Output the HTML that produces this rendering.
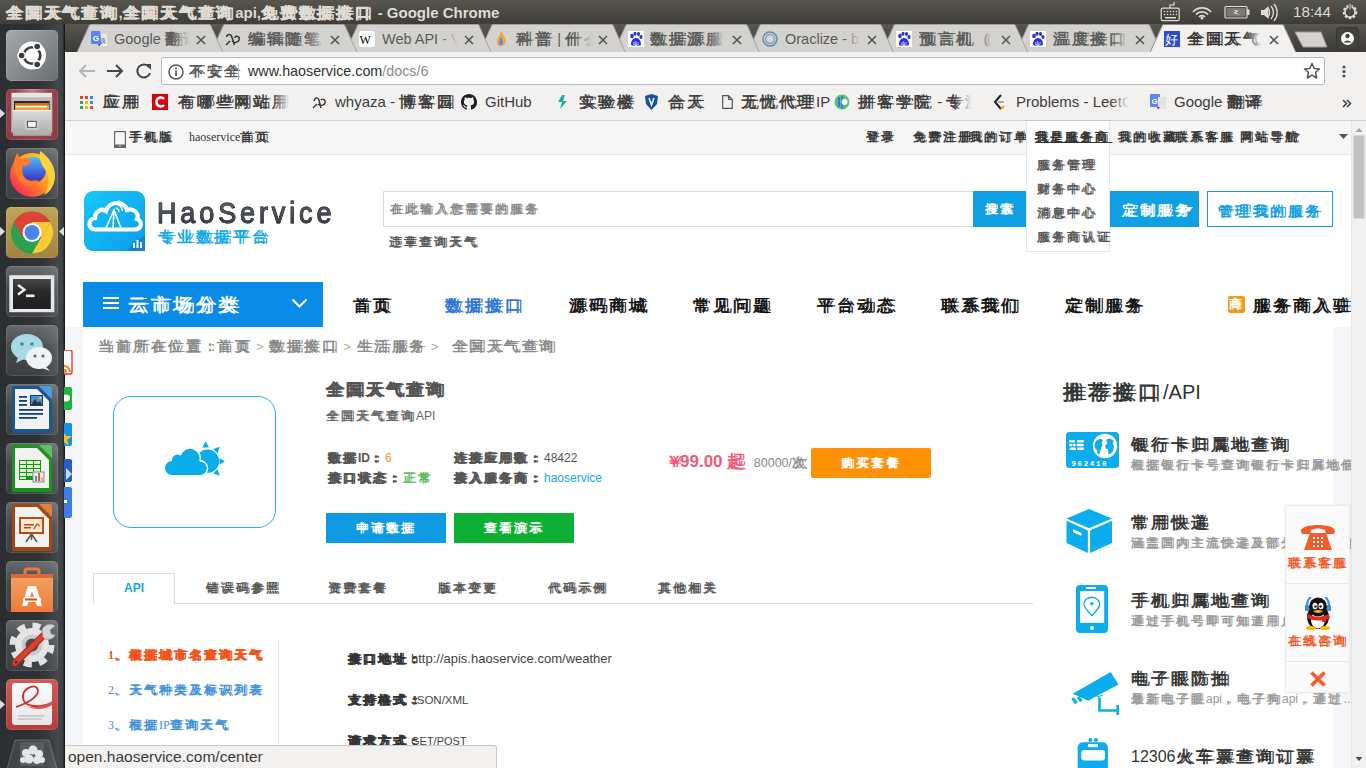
<!DOCTYPE html>
<html><head><meta charset="utf-8">
<style>
*{box-sizing:border-box;margin:0;padding:0}
html,body{width:1366px;height:768px;overflow:hidden;background:#fff;font-family:"Liberation Sans",sans-serif;}
.a{position:absolute}
#title{left:0;top:0;width:1366px;height:24px;background:linear-gradient(#56554e,#3d3c38);color:#dfdbd2;font-size:15px;font-weight:bold;line-height:26px;padding-left:6px;white-space:nowrap}
#launcher{left:0;top:24px;width:65px;height:744px;background:linear-gradient(to right,#2b2f32 0,#2e3235 38px,#383b3e 48px,#45484a 58px,#3e4143 63px,#1c1e20 64px);border-right:1px solid #16181a}
.tile{position:absolute;left:6px;width:52px;height:51px;border-radius:5px;background:linear-gradient(rgba(255,255,255,0.28),rgba(255,255,255,0.12) 45%,rgba(255,255,255,0.08));box-shadow:inset 0 0 0 1px rgba(255,255,255,0.12);overflow:hidden}
.tile svg{position:absolute;left:0;top:0}
#tabstrip{left:65px;top:24px;width:1301px;height:28px;background:linear-gradient(#57564f,#3c3b37)}
.ttl{font-size:14.5px;white-space:nowrap;overflow:hidden;width:76px;height:20px;line-height:20px}
.fade{position:absolute;right:0;top:0;width:18px;height:20px}
#toolbar{left:65px;top:52px;width:1301px;height:69px;background:#f2f1f0;border-bottom:1px solid #cdcdcd}
#omni{left:161px;top:57px;width:1164px;height:28px;background:#fff;border:1px solid #b9b9b9;border-radius:2px}
.bm{position:absolute;top:92px;font-size:15px;color:#3c3c3c;white-space:nowrap;line-height:20px}
#page{left:65px;top:121px;width:1287px;height:647px;background:#fff;overflow:hidden}
#topbar{left:0;top:0;width:1287px;height:34px;background:#f7f7f7;border-bottom:1px solid #e6e6e6;font-size:13px;color:#333}
.tb{position:absolute;top:8px;white-space:nowrap;line-height:17px}
#scroll{left:1352px;top:121px;width:14px;height:647px;background:#f1f1f1;border-left:1px solid #e8e8e8}
.tp{position:absolute;top:129px;font-size:12px;color:#333;line-height:17px;white-space:nowrap}
.dd{position:absolute;left:1037px;font-size:12px;color:#555;line-height:17px;white-space:nowrap}
.nv{position:absolute;top:295px;font-size:16px;color:#111;line-height:21px;white-space:nowrap}
.inf{position:absolute;font-size:12px;color:#555;line-height:17px;white-space:nowrap}
.inf b{color:#555}
.tbx{position:absolute;top:579px;font-size:12px;color:#555;line-height:18px;white-space:nowrap}
.lm{position:absolute;left:108px;font-size:12px;line-height:18px;white-space:nowrap}
.ap{position:absolute;left:348px;font-size:12px;color:#444;line-height:18px;white-space:nowrap}
.ap b{color:#333;display:inline-block;width:63px}
.rt{position:absolute;left:1131px;font-size:16px;color:#333;line-height:20px;white-space:nowrap}
.rs{position:absolute;left:1131px;font-size:12px;color:#999;line-height:16px;white-space:nowrap}
.fp{position:absolute;left:1285px;width:65px;text-align:center;font-size:12px;color:#f05a28;line-height:17px}
.c{letter-spacing:.25em;-webkit-text-stroke:.04em currentColor;text-shadow:.2em 0 0 currentColor}
</style></head><body>
<div id="title" class="a"><span class="c">全国天气查询</span>,<span class="c">全国天气查询</span>api,<span class="c">免费数据接口</span> - Google Chrome</div>
<svg class="a" style="left:1150px;top:0" width="216" height="24" viewBox="0 0 216 24">
 <g fill="none" stroke="#dfdbd2" stroke-width="1.2">
  <rect x="11.2" y="8.2" width="18" height="12.5" rx="1.5"/><path d="M20 8 L20 5 L24 5 L24 2"/>
  <path d="M43 12 A12 12 0 0 1 61 12 M46 14.5 A8 8 0 0 1 58 14.5 M49 17 A4 4 0 0 1 55 17" stroke-width="1.8"/>
  <rect x="75" y="6.5" width="22" height="11.5" rx="1"/>
  <path d="M118 8 A7 7 0 0 1 118 17 M121 6 A10 10 0 0 1 121 19 M124 4 A13 13 0 0 1 124 21" stroke-width="1.3"/>
 </g>
 <rect x="97" y="9.5" width="2.5" height="5.5" fill="#dfdbd2"/>
 <rect x="76.5" y="8" width="19" height="8.5" fill="#7a7770"/>
 <path d="M83 10 L89 10.5 L86 12.5 L90 15 L83 13 L86 11.5Z" fill="#dfdbd2"/>
 <g fill="#dfdbd2"><circle cx="14.5" cy="11.5" r=".8"/><circle cx="17.5" cy="11.5" r=".8"/><circle cx="20.5" cy="11.5" r=".8"/><circle cx="23.5" cy="11.5" r=".8"/><circle cx="26.5" cy="11.5" r=".8"/><circle cx="14.5" cy="14.5" r=".8"/><circle cx="17.5" cy="14.5" r=".8"/><circle cx="20.5" cy="14.5" r=".8"/><circle cx="23.5" cy="14.5" r=".8"/><circle cx="26.5" cy="14.5" r=".8"/><rect x="15" y="17" width="11" height="1.5"/>
 <circle cx="52" cy="18" r="1.5"/>
 <path d="M111 10 L114 10 L118.5 6 L118.5 19 L114 15 L111 15Z"/></g>
 <g transform="translate(200,12)"><circle r="6" fill="none" stroke="#dfdbd2" stroke-width="2.6" stroke-dasharray="2.4 1.6"/><circle r="5.2" fill="none" stroke="#dfdbd2" stroke-width="1.6"/><rect x="-1" y="-9" width="2" height="7" fill="#dfdbd2" stroke="#46453f" stroke-width="1"/></g>
</svg>
<div class="a" style="left:1293px;top:3px;font-size:15.2px;color:#dfdbd2;line-height:18px">18:44</div>
<div id="launcher" class="a"></div>
<div id="tabstrip" class="a"></div>
<div class="a" style="left:0;top:24px;width:65px;height:744px;overflow:hidden">
<!-- ubuntu -->
<div class="tile" style="top:6px;background:linear-gradient(135deg,#a3a9ac,#686f72);"><svg width="52" height="51"><circle cx="26" cy="25.5" r="14" fill="#fff"/><circle cx="26" cy="25.5" r="8.3" fill="none" stroke="#3c3c3c" stroke-width="2.6"/><circle cx="15.6" cy="25.5" r="4.4" fill="#fff"/><circle cx="31.2" cy="16.5" r="4.4" fill="#fff"/><circle cx="31.2" cy="34.5" r="4.4" fill="#fff"/><circle cx="15.6" cy="25.5" r="2.8" fill="#3c3c3c"/><circle cx="31.2" cy="16.5" r="2.8" fill="#3c3c3c"/><circle cx="31.2" cy="34.5" r="2.8" fill="#3c3c3c"/></svg></div>
<!-- files -->
<div class="tile" style="top:65px;background:radial-gradient(ellipse at 50% 0%,#c8868e 0,#9a4450 45%,#8a3a46 100%);"><svg width="52" height="51"><defs><linearGradient id="fdr" x1="0" y1="0" x2="0" y2="1"><stop offset="0" stop-color="#dcdcdc"/><stop offset="1" stop-color="#a9a9a9"/></linearGradient></defs>
<rect x="5.5" y="3.8" width="40.5" height="5" fill="#e6e6e6"/><rect x="5.3" y="8.5" width="41" height="35" fill="#bdbdbd"/><rect x="8" y="12" width="35.6" height="9" fill="#2a2a2a"/><rect x="9" y="14" width="34" height="7" fill="#f0a040"/><rect x="9" y="14" width="34" height="2" fill="#d86a28"/><rect x="10" y="17" width="31" height="1.3" fill="#fff"/>
<rect x="6.9" y="21" width="38.3" height="25.8" fill="url(#fdr)"/><rect x="6.9" y="21" width="38.3" height="1.3" fill="#eee"/><rect x="19" y="30" width="13.7" height="11" rx="1.5" fill="#c9c9c9"/><rect x="21.5" y="32.3" width="8.7" height="6" fill="#f4f4f4" stroke="#444" stroke-width=".9"/></svg></div>
<!-- firefox -->
<div class="tile" style="top:124px;"><svg width="52" height="51"><defs><linearGradient id="ffg" x1="1" y1="0" x2="0" y2="1"><stop offset="0" stop-color="#ffe531"/><stop offset=".45" stop-color="#ff9a22"/><stop offset=".8" stop-color="#ff3a4a"/><stop offset="1" stop-color="#d4177f"/></linearGradient><linearGradient id="fbg" x1="0" y1="0" x2="0" y2="1"><stop offset="0" stop-color="#50baff"/><stop offset="1" stop-color="#3a27b8"/></linearGradient></defs>
<circle cx="26" cy="27" r="22" fill="url(#ffg)"/><circle cx="27" cy="22" r="13" fill="url(#fbg)"/>
<path d="M8 13 L11 5 L15 11 C20 9 24 11 25 14 L21 17 L17 18 C15 24 17 30 22 32 C26 34 30 31 33 33 C29 38 22 39 17 36 C11 32 8 22 8 13Z" fill="#ff7a2a"/>
<path d="M34 3 C42 8 50 18 49 30 C48 38 44 44 38 47 C44 38 44 28 38 20 C35 16 33 10 34 3Z" fill="#ffd23a"/></svg></div>
<!-- chrome -->
<div class="tile" style="top:183px;background:linear-gradient(#c0a659,#9e8440);"><svg width="52" height="51"><circle cx="26" cy="25.5" r="21" fill="#2aa24d"/><path d="M26 4.5 A21 21 0 0 1 44.2 15 L26 15 Z" fill="#db4437"/><path d="M7.8 15 A21 21 0 0 1 26 4.5 L44.2 15 L26 15 L16.9 30.75Z" fill="#db4437"/><path d="M44.2 15 A21 21 0 0 1 26 46.5 L35.1 30.75Z" fill="#fcc934"/><path d="M26 15 L44.2 15 L35.1 30.75Z" fill="#fcc934"/><circle cx="26" cy="25.5" r="9.5" fill="#fff"/><circle cx="26" cy="25.5" r="7.5" fill="#4a86e8"/></svg></div>
<!-- terminal -->
<div class="tile" style="top:242px;"><svg width="52" height="51"><defs><linearGradient id="term" x1="0" y1="0" x2="0" y2="1"><stop offset="0" stop-color="#4a4a4a"/><stop offset=".4" stop-color="#2a2a2a"/><stop offset="1" stop-color="#1e1e1e"/></linearGradient></defs><rect x="3.3" y="9.2" width="45" height="37" fill="#e8e8e8"/><rect x="7" y="13" width="37.8" height="30" fill="url(#term)"/><path d="M12 19 L18.5 23.7 L12 28.5" stroke="#f0f0f0" stroke-width="2.4" fill="none"/><rect x="20" y="28.5" width="8.5" height="2.6" fill="#f0f0f0"/></svg></div>
<!-- wechat -->
<div class="tile" style="top:301px;"><svg width="52" height="51"><ellipse cx="21" cy="22" rx="16" ry="13" fill="#a6dbe6"/><path d="M12 32 L10 38 L18 34Z" fill="#a6dbe6"/><circle cx="16" cy="19" r="1.8" fill="#5c7a82"/><circle cx="26" cy="19" r="1.8" fill="#5c7a82"/><ellipse cx="33" cy="33" rx="13" ry="11" fill="#eef3f3"/><path d="M40 42 L44 46 L36 43Z" fill="#eef3f3"/><circle cx="29" cy="31" r="1.6" fill="#666"/><circle cx="37" cy="31" r="1.6" fill="#666"/></svg></div>
<!-- writer -->
<div class="tile" style="top:360px;"><svg width="52" height="51"><path d="M8 2 L32 2 L46 16 L46 47 Q46 49 44 49 L8 49 Q6 49 6 47 L6 4 Q6 2 8 2Z" fill="#1b5794"/><path d="M33 2 L44 2 Q46 2 46 4 L46 15Z" fill="#4f9bd9"/><path d="M9 5 L31 5 L43 17 L43 45 L9 45Z" fill="#f2f2f2"/><rect x="13" y="12" width="8" height="1.8" fill="#123f7a"/><rect x="13" y="16" width="8" height="1.8" fill="#123f7a"/><rect x="13" y="20" width="8" height="1.8" fill="#123f7a"/><rect x="24" y="11" width="13" height="11" fill="#123f7a"/><rect x="25" y="12" width="11" height="9" fill="#4a8fd0"/><path d="M25 21 L29 15 L32 19 L34 17 L36 21Z" fill="#333"/><circle cx="34.5" cy="14" r="1.3" fill="#f5c542"/><rect x="13" y="25" width="24" height="1.8" fill="#123f7a"/><rect x="13" y="29" width="24" height="1.8" fill="#123f7a"/><rect x="13" y="33" width="18" height="1.8" fill="#123f7a"/></svg></div>
<!-- calc -->
<div class="tile" style="top:419px;"><svg width="52" height="51"><path d="M8 2 L32 2 L46 16 L46 47 Q46 49 44 49 L8 49 Q6 49 6 47 L6 4 Q6 2 8 2Z" fill="#18961a"/><path d="M33 2 L44 2 Q46 2 46 4 L46 15Z" fill="#5cc25a"/><path d="M9 5 L31 5 L43 17 L43 45 L9 45Z" fill="#f2f2f2"/><rect x="13" y="17" width="22" height="20" fill="#18961a"/><g fill="#d8f3d0"><rect x="14" y="18" width="6" height="3"/><rect x="21" y="18" width="6" height="3"/><rect x="28" y="18" width="6" height="3"/><rect x="14" y="22" width="6" height="3"/><rect x="21" y="22" width="6" height="3"/><rect x="28" y="22" width="6" height="3"/><rect x="14" y="26" width="6" height="3"/><rect x="21" y="26" width="6" height="3"/><rect x="28" y="26" width="6" height="3"/><rect x="14" y="30" width="6" height="3"/><rect x="21" y="30" width="6" height="3"/><rect x="14" y="34" width="6" height="2"/></g><rect x="27" y="29" width="11" height="10" fill="#eee" stroke="#888" stroke-width="1"/><rect x="29" y="33" width="2" height="5" fill="#3d8ee8"/><rect x="32" y="30" width="2" height="8" fill="#e8562a"/><rect x="35" y="34" width="2" height="4" fill="#f5b82e"/></svg></div>
<!-- impress -->
<div class="tile" style="top:478px;"><svg width="52" height="51"><path d="M8 2 L32 2 L46 16 L46 47 Q46 49 44 49 L8 49 Q6 49 6 47 L6 4 Q6 2 8 2Z" fill="#a5460f"/><path d="M33 2 L44 2 Q46 2 46 4 L46 15Z" fill="#e0803a"/><path d="M9 5 L31 5 L43 17 L43 45 L9 45Z" fill="#f2f2f2"/><rect x="13" y="15" width="25" height="17" fill="#b84c0f"/><rect x="15" y="17" width="21" height="13" fill="#fde8d6"/><rect x="18" y="22" width="10" height="1.5" fill="#b84c0f"/><rect x="18" y="25" width="7" height="1.5" fill="#b84c0f"/><path d="M28 27 L31 22 L34 24" stroke="#d04020" stroke-width="1.3" fill="none"/><path d="M25.5 32 L20 40 M25.5 32 L31 40 M25.5 32 L25.5 38" stroke="#555" stroke-width="1.5"/></svg></div>
<!-- software -->
<div class="tile" style="top:537px;"><svg width="52" height="51"><defs><linearGradient id="bag" x1="0" y1="0" x2="0" y2="1"><stop offset="0" stop-color="#f4a060"/><stop offset="1" stop-color="#ee7a3a"/></linearGradient></defs><path d="M19 18 L19 10 Q19 8 21 8 L31 8 Q33 8 33 10 L33 18" stroke="#e87848" stroke-width="3" fill="none"/><rect x="5" y="13" width="42" height="4" fill="#d8683a"/><rect x="5" y="17" width="42" height="34" fill="url(#bag)"/><path d="M22 25 L30 25 L36 45 L31 45 L26 30 L21 45 L16 45Z" fill="#fff"/><rect x="17" y="36" width="18" height="5" rx="2.5" fill="#fff"/><rect x="19" y="37.5" width="12" height="2" fill="#e04a10"/></svg></div>
<!-- settings -->
<div class="tile" style="top:596px;"><svg width="52" height="51"><circle cx="26" cy="25" r="19.5" fill="none" stroke="#e2e2e2" stroke-width="6" stroke-dasharray="8 7.3"/><circle cx="26" cy="25" r="17" fill="#e4e4e4"/><circle cx="26" cy="25" r="10.5" fill="#c9c9c9"/><circle cx="26" cy="25" r="6.5" fill="#4e4e4e"/><path d="M9 43 L39 14" stroke="#a82a20" stroke-width="7" stroke-linecap="round"/><path d="M9 43 L39 14" stroke="#d8402e" stroke-width="5" stroke-linecap="round"/><circle cx="10" cy="42" r="1.6" fill="#8a1e16"/><path d="M36 10 C38 4 46 3 49 6 L44 10 L45 14 L49 15 C47 20 40 21 37 17Z" fill="#d6d6d6" stroke="#9a9a9a" stroke-width=".8"/></svg></div>
<!-- red app -->
<div class="tile" style="top:655px;background:linear-gradient(#d25a5a,#b43c3c);"><svg width="52" height="51"><defs><linearGradient id="rdoc" x1="0" y1="0" x2="0" y2="1"><stop offset="0" stop-color="#fbfbfb"/><stop offset="1" stop-color="#e6e6e6"/></linearGradient></defs><rect x="6" y="4" width="40" height="42" rx="3" fill="url(#rdoc)"/><path d="M10 28 C22 24 36 16 31 9 C27 5 16 10 17 19 C18 27 30 30 46 24" stroke="#d22a2a" stroke-width="1.8" fill="none"/><path d="M20 27 C30 30 40 27 46 22 L46 26 C38 31 28 31 20 27Z" fill="#e05050"/><path d="M12 37 H38 M12 40 H36" stroke="#aaa" stroke-width=".9"/></svg></div>
<!-- trash -->
<div class="tile" style="top:714px;background:none;box-shadow:none;overflow:visible"><svg width="52" height="51"><path d="M9 2 L43 2 L51 31 L1 31Z" fill="rgba(255,255,255,0.10)" stroke="rgba(255,255,255,0.22)" stroke-width="1"/><rect x="14" y="4" width="24" height="24" rx="2" fill="rgba(255,255,255,0.12)"/><g fill="#e6e6e6"><circle cx="20" cy="15" r="4"/><circle cx="27" cy="12" r="4.5"/><circle cx="33" cy="16" r="4"/><circle cx="23" cy="21" r="4.5"/><circle cx="31" cy="22" r="4"/><circle cx="17" cy="22" r="3"/><circle cx="36" cy="22" r="3"/></g></svg></div>
<!-- arrows -->
<svg class="a" style="left:0;top:0" width="65" height="744"><path d="M0 85 L5 89.5 L0 94Z" fill="#ddd"/><path d="M0 203 L5 207.5 L0 212Z" fill="#ddd"/><path d="M64 203 L59 207.5 L64 212Z" fill="#ddd"/><path d="M0 676 L5 680.5 L0 685Z" fill="#ddd"/></svg>
</div>
<svg class="a" style="left:65px;top:24px" width="1301" height="28">
<path d="M950.9 28.5 L963.4 1 Q963.9 0.5 964.9 0.5 L1082.9 0.5 Q1083.9 0.5 1084.4 1 L1096.9 28.5Z" fill="#d3d2cf" stroke="#a3a29e" stroke-width="1"/>
<path d="M816.8 28.5 L829.2 1 Q829.8 0.5 830.8 0.5 L948.8 0.5 Q949.8 0.5 950.2 1 L962.8 28.5Z" fill="#d3d2cf" stroke="#a3a29e" stroke-width="1"/>
<path d="M682.6 28.5 L695.1 1 Q695.6 0.5 696.6 0.5 L814.6 0.5 Q815.6 0.5 816.1 1 L828.6 28.5Z" fill="#d3d2cf" stroke="#a3a29e" stroke-width="1"/>
<path d="M548.5 28.5 L561.0 1 Q561.5 0.5 562.5 0.5 L680.5 0.5 Q681.5 0.5 682.0 1 L694.5 28.5Z" fill="#d3d2cf" stroke="#a3a29e" stroke-width="1"/>
<path d="M414.4 28.5 L426.9 1 Q427.4 0.5 428.4 0.5 L546.4 0.5 Q547.4 0.5 547.9 1 L560.4 28.5Z" fill="#d3d2cf" stroke="#a3a29e" stroke-width="1"/>
<path d="M280.2 28.5 L292.8 1 Q293.2 0.5 294.2 0.5 L412.2 0.5 Q413.2 0.5 413.8 1 L426.2 28.5Z" fill="#d3d2cf" stroke="#a3a29e" stroke-width="1"/>
<path d="M146.1 28.5 L158.6 1 Q159.1 0.5 160.1 0.5 L278.1 0.5 Q279.1 0.5 279.6 1 L292.1 28.5Z" fill="#d3d2cf" stroke="#a3a29e" stroke-width="1"/>
<path d="M12.0 28.5 L24.5 1 Q25.0 0.5 26.0 0.5 L144.0 0.5 Q145.0 0.5 145.5 1 L158.0 28.5Z" fill="#d3d2cf" stroke="#a3a29e" stroke-width="1"/>
<path d="M1085.0 28.5 L1097.5 1 Q1098.0 0.5 1099.0 0.5 L1217.0 0.5 Q1218.0 0.5 1218.5 1 L1231.0 28.5Z" fill="#f2f1f0" stroke="#8d8c88" stroke-width="1"/>
<path d="M1230 8 L1256 8 L1262 23 L1238 23Z" fill="#d3d2cf" stroke="#9d9c98" stroke-width="1"/>
<rect x="1271.5" y="3.5" width="22" height="22" rx="3" fill="#434239" stroke="#35342f"/>
<circle cx="1282.5" cy="14.5" r="6.5" fill="#fff"/><circle cx="1282.5" cy="12" r="2.2" fill="#434239"/><path d="M1278.5 18.5 Q1282.5 14.5 1286.5 18.5Z" fill="#434239"/>
</svg>
<div class="a" style="left:91px;top:31px;"><svg width="16" height="16" viewBox="0 0 16 16"><rect x="8" y="3" width="8" height="12" fill="#e9e9e9"/><path d="M7 13 L10 13 L8 15.5Z" fill="#3b3ec8"/><path d="M0 1 Q0 0 1 0 L9 0 L11 13 L1 13 Q0 13 0 12Z" fill="#5a84f5"/><text x="1.8" y="9.5" font-size="8" font-weight="bold" fill="#fff" font-family="Liberation Sans">G</text><path d="M11 8 L14 8 M12.5 7 L12.5 8 M11.5 9 Q13 12 14.5 12 M14 9 Q12.5 12 11 12" stroke="#666" stroke-width=".8" fill="none"/></svg></div>
<div class="a ttl" style="left:114px;top:29px;color:#5a5a5a;">Google <span class="c">翻译</span><span class="fade" style="background:linear-gradient(to right,rgba(0,0,0,0),#d3d2cf)"></span></div>
<div class="a tx" style="left:196px;top:31px;"><svg width="10" height="10" viewBox="0 0 10 10"><path d="M1 1L9 9M9 1L1 9" stroke="#555" stroke-width="1.6"/></svg></div>
<div class="a" style="left:225px;top:31px;"><svg width="16" height="16" viewBox="0 0 16 16"><path d="M1.5 6 C2 3 5 2.5 6.5 5 L9.5 14 M9.5 7 C11 4 15 5 14 9 C13 12 9 12 7 10 M1 14 L5 10" stroke="#333" stroke-width="1.5" fill="none"/></svg></div>
<div class="a ttl" style="left:248px;top:29px;color:#5a5a5a;"><span class="c">编辑随笔</span> "I<span class="fade" style="background:linear-gradient(to right,rgba(0,0,0,0),#d3d2cf)"></span></div>
<div class="a tx" style="left:330px;top:31px;"><svg width="10" height="10" viewBox="0 0 10 10"><path d="M1 1L9 9M9 1L1 9" stroke="#555" stroke-width="1.6"/></svg></div>
<div class="a" style="left:359px;top:31px;"><svg width="16" height="16" viewBox="0 0 16 16"><rect width="16" height="16" rx="3" fill="#fff"/><text x="0.5" y="12.5" font-size="12" font-family="Liberation Serif" fill="#000">W</text></svg></div>
<div class="a ttl" style="left:382px;top:29px;color:#5a5a5a;">Web API - V<span class="fade" style="background:linear-gradient(to right,rgba(0,0,0,0),#d3d2cf)"></span></div>
<div class="a tx" style="left:464px;top:31px;"><svg width="10" height="10" viewBox="0 0 10 10"><path d="M1 1L9 9M9 1L1 9" stroke="#555" stroke-width="1.6"/></svg></div>
<div class="a" style="left:493px;top:31px;"><svg width="16" height="16" viewBox="0 0 16 16"><path d="M8 0 C11 5 14 8 12 13 C10 16 5 16 4 12 C3 9 6 6 8 0Z" fill="#f3a43a"/><path d="M8 6 C9 9 11 11 9 14 C7 15 6 13 6 11Z" fill="#4a8fe8"/></svg></div>
<div class="a ttl" style="left:516px;top:29px;color:#5a5a5a;"><span class="c">科普</span> | <span class="c">什么是</span><span class="fade" style="background:linear-gradient(to right,rgba(0,0,0,0),#d3d2cf)"></span></div>
<div class="a tx" style="left:598px;top:31px;"><svg width="10" height="10" viewBox="0 0 10 10"><path d="M1 1L9 9M9 1L1 9" stroke="#555" stroke-width="1.6"/></svg></div>
<div class="a" style="left:628px;top:31px;"><svg width="16" height="16" viewBox="0 0 16 16"><rect width="16" height="16" fill="#fff"/><ellipse cx="4" cy="5" rx="1.8" ry="2.3" fill="#2932e1"/><ellipse cx="7" cy="2.8" rx="1.6" ry="2" fill="#2932e1"/><ellipse cx="10.5" cy="3" rx="1.6" ry="2" fill="#2932e1"/><ellipse cx="13" cy="6" rx="1.6" ry="2" fill="#2932e1"/><path d="M3 13 C3 9 6 7 8 7 C11 7 13 10 13 13 C13 15 10 15 8 14 C6 15 3 15 3 13Z" fill="#2932e1"/><text x="5" y="13.5" font-size="5" fill="#fff" font-family="Liberation Sans">du</text></svg></div>
<div class="a ttl" style="left:650px;top:29px;color:#5a5a5a;"><span class="c">数据源服务</span><span class="fade" style="background:linear-gradient(to right,rgba(0,0,0,0),#d3d2cf)"></span></div>
<div class="a tx" style="left:732px;top:31px;"><svg width="10" height="10" viewBox="0 0 10 10"><path d="M1 1L9 9M9 1L1 9" stroke="#555" stroke-width="1.6"/></svg></div>
<div class="a" style="left:762px;top:31px;"><svg width="16" height="16" viewBox="0 0 16 16"><circle cx="8" cy="8" r="7" fill="none" stroke="#5b8fb0" stroke-width="1.5"/><circle cx="8" cy="8" r="4.5" fill="none" stroke="#7aa6c2" stroke-width="1.5"/><circle cx="8" cy="8" r="2" fill="#cfe0ea"/></svg></div>
<div class="a ttl" style="left:785px;top:29px;color:#5a5a5a;">Oraclize - b<span class="fade" style="background:linear-gradient(to right,rgba(0,0,0,0),#d3d2cf)"></span></div>
<div class="a tx" style="left:867px;top:31px;"><svg width="10" height="10" viewBox="0 0 10 10"><path d="M1 1L9 9M9 1L1 9" stroke="#555" stroke-width="1.6"/></svg></div>
<div class="a" style="left:896px;top:31px;"><svg width="16" height="16" viewBox="0 0 16 16"><rect width="16" height="16" fill="#fff"/><ellipse cx="4" cy="5" rx="1.8" ry="2.3" fill="#2932e1"/><ellipse cx="7" cy="2.8" rx="1.6" ry="2" fill="#2932e1"/><ellipse cx="10.5" cy="3" rx="1.6" ry="2" fill="#2932e1"/><ellipse cx="13" cy="6" rx="1.6" ry="2" fill="#2932e1"/><path d="M3 13 C3 9 6 7 8 7 C11 7 13 10 13 13 C13 15 10 15 8 14 C6 15 3 15 3 13Z" fill="#2932e1"/><text x="5" y="13.5" font-size="5" fill="#fff" font-family="Liberation Sans">du</text></svg></div>
<div class="a ttl" style="left:919px;top:29px;color:#5a5a5a;"><span class="c">预言机（</span>Or<span class="fade" style="background:linear-gradient(to right,rgba(0,0,0,0),#d3d2cf)"></span></div>
<div class="a tx" style="left:1001px;top:31px;"><svg width="10" height="10" viewBox="0 0 10 10"><path d="M1 1L9 9M9 1L1 9" stroke="#555" stroke-width="1.6"/></svg></div>
<div class="a" style="left:1030px;top:31px;"><svg width="16" height="16" viewBox="0 0 16 16"><rect width="16" height="16" fill="#fff"/><ellipse cx="4" cy="5" rx="1.8" ry="2.3" fill="#2932e1"/><ellipse cx="7" cy="2.8" rx="1.6" ry="2" fill="#2932e1"/><ellipse cx="10.5" cy="3" rx="1.6" ry="2" fill="#2932e1"/><ellipse cx="13" cy="6" rx="1.6" ry="2" fill="#2932e1"/><path d="M3 13 C3 9 6 7 8 7 C11 7 13 10 13 13 C13 15 10 15 8 14 C6 15 3 15 3 13Z" fill="#2932e1"/><text x="5" y="13.5" font-size="5" fill="#fff" font-family="Liberation Sans">du</text></svg></div>
<div class="a ttl" style="left:1053px;top:29px;color:#5a5a5a;"><span class="c">温度接口</span>_<span class="c">百</span><span class="fade" style="background:linear-gradient(to right,rgba(0,0,0,0),#d3d2cf)"></span></div>
<div class="a tx" style="left:1135px;top:31px;"><svg width="10" height="10" viewBox="0 0 10 10"><path d="M1 1L9 9M9 1L1 9" stroke="#555" stroke-width="1.6"/></svg></div>
<div class="a" style="left:1164px;top:31px;"><svg width="16" height="16" viewBox="0 0 16 16"><rect width="16" height="16" fill="#2a4fc8"/><text x="1" y="13" font-size="13" fill="#fff" font-family="Liberation Sans">好</text></svg></div>
<div class="a ttl" style="left:1187px;top:29px;color:#333;"><span class="c">全国天气查</span><span class="fade" style="background:linear-gradient(to right,rgba(0,0,0,0),#f2f1f0)"></span></div>
<div class="a tx" style="left:1269px;top:31px;"><svg width="10" height="10" viewBox="0 0 10 10"><path d="M1 1L9 9M9 1L1 9" stroke="#555" stroke-width="1.6"/></svg></div><div id="toolbar" class="a"></div>
<svg class="a" style="left:65px;top:52px" width="1301" height="68">
 <g stroke="#b4b4b4" stroke-width="2" fill="none"><path d="M30 19 L15 19 M21 13 L15 19 L21 25"/></g>
 <g stroke="#474747" stroke-width="2" fill="none"><path d="M42 19 L57 19 M51 13 L57 19 L51 25"/></g>
 <g stroke="#474747" stroke-width="2" fill="none"><path d="M84 15 A6.5 6.5 0 1 0 85 21"/></g>
 <path d="M80 12 L86 12 L86 18Z" fill="#474747"/>
 <!-- menu dots -->
 <circle cx="1279" cy="15" r="1.6" fill="#555"/><circle cx="1279" cy="19.5" r="1.6" fill="#555"/><circle cx="1279" cy="24" r="1.6" fill="#555"/>
</svg>
<div id="omni" class="a">
 <svg class="a" style="left:5px;top:5px" width="18" height="18"><circle cx="9" cy="9" r="7" fill="none" stroke="#555" stroke-width="1.5"/><rect x="8.2" y="7.5" width="1.7" height="5.5" fill="#555"/><rect x="8.2" y="4.5" width="1.7" height="1.7" fill="#555"/></svg>
 <div class="a" style="left:27px;top:3px;font-size:14px;color:#555;line-height:20px"><span class="c">不安全</span></div>
 <div class="a" style="left:76px;top:5px;width:1px;height:17px;background:#bbb"></div>
 <div class="a" style="left:86px;top:3px;font-size:14.3px;color:#303030;line-height:20px;white-space:nowrap">www.haoservice.com<span style="color:#8a8a8a">/docs/6</span></div>
 <svg class="a" style="left:1141px;top:4px" width="18" height="18"><path d="M9 1.5 L11.2 6.5 L16.5 7 L12.5 10.5 L13.7 16 L9 13.2 L4.3 16 L5.5 10.5 L1.5 7 L6.8 6.5Z" fill="none" stroke="#555" stroke-width="1.5" stroke-linejoin="round"/></svg>
</div>
<!-- bookmarks -->
<svg class="a" style="left:80px;top:96px" width="13" height="13"><g><rect x="0" y="0" width="3" height="3" fill="#ea4335"/><rect x="5" y="0" width="3" height="3" fill="#ea4335"/><rect x="10" y="0" width="3" height="3" fill="#4285f4"/><rect x="0" y="5" width="3" height="3" fill="#34a853"/><rect x="5" y="5" width="3" height="3" fill="#fbbc05"/><rect x="10" y="5" width="3" height="3" fill="#4285f4"/><rect x="0" y="10" width="3" height="3" fill="#34a853"/><rect x="5" y="10" width="3" height="3" fill="#fbbc05"/><rect x="10" y="10" width="3" height="3" fill="#ea4335"/></g></svg>
<div class="bm" style="left:103px"><span class="c">应用</span></div>
<svg class="a" style="left:152px;top:94px" width="16" height="16"><rect width="16" height="16" fill="#d7000f"/><path d="M12 5 C10 2.5 4.5 3 4.5 8 C4.5 13 10 13.5 12 11" stroke="#fff" stroke-width="2.6" fill="none"/></svg>
<div class="bm" style="left:178px;width:112px;overflow:hidden"><span class="c">有哪些网站用爬虫</span><span class="fade" style="background:linear-gradient(to right,rgba(242,241,240,0),#f2f1f0)"></span></div>
<svg class="a" style="left:312px;top:94px" width="16" height="16"><path d="M2 7 C3 3 6 3 7 6 L9 14 M9 6 C11 4 14 6 13 9 C12 12 8 12 6 10 M1 14 L5 10" stroke="#333" stroke-width="1.4" fill="none"/></svg>
<div class="bm" style="left:335px">whyaza - <span class="c">博客园</span></div>
<svg class="a" style="left:461px;top:94px" width="16" height="16" viewBox="0 0 16 16"><path fill="#1b1f23" d="M8 0C3.58 0 0 3.58 0 8c0 3.54 2.29 6.53 5.47 7.59.4.07.55-.17.55-.38 0-.19-.01-.82-.01-1.49-2.01.37-2.53-.49-2.69-.94-.09-.23-.48-.94-.82-1.13-.28-.15-.68-.52-.01-.53.63-.01 1.08.58 1.23.82.72 1.21 1.87.87 2.33.66.07-.52.28-.87.51-1.07-1.78-.2-3.64-.89-3.64-3.95 0-.87.31-1.59.82-2.15-.08-.2-.36-1.02.08-2.12 0 0 .67-.21 2.2.82.64-.18 1.32-.27 2-.27.68 0 1.36.09 2 .27 1.53-1.04 2.2-.82 2.2-.82.44 1.1.16 1.92.08 2.12.51.56.82 1.27.82 2.15 0 3.07-1.87 3.75-3.65 3.95.29.25.54.73.54 1.48 0 1.07-.01 1.93-.01 2.2 0 .21.15.46.55.38A8.013 8.013 0 0016 8c0-4.42-3.58-8-8-8z"/></svg>
<div class="bm" style="left:485px">GitHub</div>
<svg class="a" style="left:557px;top:95px" width="11" height="14"><path d="M5 0 L1 7 L5 7 L3 14 L10 6 L6 6 L8 0Z" fill="#1bb39b"/></svg>
<div class="bm" style="left:579px"><span class="c">实验楼</span></div>
<svg class="a" style="left:645px;top:94px" width="13" height="16"><path d="M6.5 0 L13 2 L12 10 L6.5 16 L1 10 L0 2Z" fill="#1d4fa0"/><path d="M4 4 L6.5 11 L9 4" stroke="#fff" stroke-width="1.5" fill="none"/></svg>
<div class="bm" style="left:668px"><span class="c">合天</span></div>
<svg class="a" style="left:722px;top:95px" width="11" height="14"><path d="M0.7 0.7 L6.5 0.7 L10.3 4.5 L10.3 13.3 L0.7 13.3Z M6.5 0.7 L6.5 4.5 L10.3 4.5" fill="none" stroke="#555" stroke-width="1.2"/></svg>
<div class="bm" style="left:741px"><span class="c">无忧代理</span>IP</div>
<svg class="a" style="left:834px;top:94px" width="16" height="16"><circle cx="8" cy="8" r="7.5" fill="#5cc07a"/><path d="M5 3 L5 13 M8 2 L8 14" stroke="#2a82d0" stroke-width="2"/><circle cx="10.5" cy="8" r="3" fill="#fff"/></svg>
<div class="bm" style="left:858px;width:114px;overflow:hidden"><span class="c">拼客学院</span> - <span class="c">专注网络</span><span class="fade" style="background:linear-gradient(to right,rgba(242,241,240,0),#f2f1f0)"></span></div>
<svg class="a" style="left:992px;top:94px" width="14" height="16"><path d="M9 1 L3 8 L9 15" stroke="#222" stroke-width="2" fill="none"/><path d="M6 8 L12 8" stroke="#aaa" stroke-width="2"/><path d="M9 15 L12 12" stroke="#f0a020" stroke-width="2"/></svg>
<div class="bm" style="left:1016px;width:113px;overflow:hidden">Problems - LeetCode<span class="fade" style="background:linear-gradient(to right,rgba(242,241,240,0),#f2f1f0)"></span></div>
<svg class="a" style="left:1150px;top:94px" width="16" height="16"><rect x="0" y="0" width="10" height="13" rx="1" fill="#5a84f5"/><rect x="8" y="3" width="8" height="12" fill="#e3e3e3"/><path d="M7 13 L10 13 L8 15.5Z" fill="#3b3ec8"/><text x="1.5" y="9.5" font-size="8" font-weight="bold" fill="#fff" font-family="Liberation Sans">G</text></svg>
<div class="bm" style="left:1174px">Google <span class="c">翻译</span></div>
<svg class="a" style="left:1342px;top:99px" width="10" height="9"><path d="M1 1 L4.5 4.5 L1 8 M5 1 L8.5 4.5 L5 8" stroke="#444" stroke-width="1.6" fill="none"/></svg>
<!-- PAGE -->
<div class="a" style="left:65px;top:121px;width:1287px;height:647px;background:#fff"></div>
<div class="a" style="left:65px;top:327px;width:18px;height:441px;background:#f5f6fa"></div>
<div class="a" style="left:1333px;top:327px;width:19px;height:441px;background:#f5f6fa"></div>
<!-- topbar -->
<div class="a" style="left:65px;top:121px;width:1287px;height:34px;background:#f7f7f7;border-bottom:1px solid #e8e8e8"></div>
<svg class="a" style="left:114px;top:131px" width="12" height="17"><rect x="0.6" y="0.6" width="10.8" height="15.8" fill="none" stroke="#666" stroke-width="1.2"/><rect x="0.5" y="13.5" width="11" height="3" fill="#666"/><circle cx="6" cy="15" r=".7" fill="#fff"/></svg>
<div class="tp" style="left:129px"><span class="c">手机版</span></div>
<div class="tp" style="left:189px"><span style="font-family:'Liberation Serif',serif;font-size:12px">haoservice</span><span class="c">首页</span></div>
<div class="tp" style="left:866px"><span class="c">登录</span></div>
<div class="tp" style="left:913px"><span class="c">免费注册</span></div>
<div class="tp" style="left:969px"><span class="c">我的订单</span></div>
<div class="a" style="left:1026px;top:121px;width:84px;height:131px;background:#fff;border:1px solid #e6e6e6;border-top:none"></div>
<div class="tp" style="left:1035px;text-decoration:underline"><span class="c">我是服务商</span></div>
<svg class="a" style="left:1098px;top:133px" width="8" height="5"><path d="M0 5 L4 0 L8 5Z" fill="#555"/></svg>
<div class="tp" style="left:1118px"><span class="c">我的收藏</span></div>
<div class="tp" style="left:1175px"><span class="c">联系客服</span></div>
<div class="tp" style="left:1240px"><span class="c">网站导航</span></div>
<svg class="a" style="left:1292px;top:134px" width="8" height="5"><path d="M0 0 L4 5 L8 0Z" fill="#555"/></svg>
<svg class="a" style="left:1339px;top:134px" width="9" height="5"><path d="M0 0 L4.5 5 L9 0Z" fill="#555"/></svg>
<div class="dd" style="top:157px"><span class="c">服务管理</span></div>
<div class="dd" style="top:181px"><span class="c">财务中心</span></div>
<div class="dd" style="top:205px"><span class="c">消息中心</span></div>
<div class="dd" style="top:229px"><span class="c">服务商认证</span></div>
<!-- logo -->
<svg class="a" style="left:84px;top:191px" width="61" height="60" viewBox="0 0 61 60">
 <defs><linearGradient id="lg1" x1="0" y1="0" x2="1" y2="1"><stop offset="0" stop-color="#18c8f8"/><stop offset="1" stop-color="#0a9cec"/></linearGradient></defs>
 <rect width="61" height="60" rx="9" fill="url(#lg1)"/>
 <path d="M43 60 L61 60 L61 44 C56 48 50 52 43 60Z" fill="#1a7fd8"/>
 <rect x="49" y="52" width="2" height="5" fill="#fff"/><rect x="52.5" y="49" width="2" height="8" fill="#fff"/><rect x="56" y="51" width="2" height="6" fill="#fff"/>
 <path d="M11 38.5 C4 38.5 3 28 11 27 C11 20 18 17 22 20 C25 10 40 9 43 19 C49 17 56 22 53 28 C59 30 58 38.5 50 38.5Z" fill="none" stroke="#fff" stroke-width="4.2"/>
 <path d="M22 37 L30 19 L37 37 M30 19 L29 37" stroke="#fff" stroke-width="1.6" fill="none"/>
 <path d="M32 17 A4 4 0 0 1 35 21 M33 13.5 A7.5 7.5 0 0 1 38.5 20 M34 10 A11 11 0 0 1 42 19" stroke="#fff" stroke-width="1.3" fill="none"/>
</svg>
<div class="a" style="left:157px;top:196px;font-size:30px;letter-spacing:4.3px;line-height:34px;white-space:nowrap;transform:scaleX(0.9);transform-origin:0 0;-webkit-text-stroke:0.9px #3c3f48;background:linear-gradient(#757782,#262a35);-webkit-background-clip:text;background-clip:text;color:transparent">HaoService</div>
<div class="a" style="left:158px;top:228px;font-size:15px;letter-spacing:1.1px;line-height:18px;color:#12aaee;white-space:nowrap"><span class="c">专业数据平台</span></div>
<!-- search -->
<div class="a" style="left:383px;top:191px;width:591px;height:36px;border:1px solid #dcdcdc;background:#fff"></div>
<div class="a" style="left:390px;top:200px;font-size:12px;color:#888;line-height:18px"><span class="c">在此输入您需要的服务</span></div>
<div class="a" style="left:973px;top:191px;width:53px;height:36px;background:#0fa0e4;color:#fff;font-size:12px;line-height:36px;text-align:center"><span class="c">搜索</span></div>
<div class="a" style="left:1110px;top:191px;width:89px;height:36px;background:#0fa0e4"></div>
<div class="a" style="left:1122px;top:201px;font-size:14px;color:#fff;line-height:18px"><span class="c">定制服务</span></div>
<svg class="a" style="left:1185px;top:207px" width="8" height="5"><path d="M0 0 L4 5 L8 0Z" fill="#fff"/></svg>
<div class="a" style="left:1207px;top:191px;width:126px;height:36px;border:1px solid #0fa0e4;color:#0fa0e4;font-size:14px;line-height:38px;text-align:center"><span class="c">管理我的服务</span></div>
<div class="a" style="left:389px;top:234px;font-size:12px;color:#555;line-height:17px"><span class="c">违章查询</span></div>
<div class="a" style="left:449px;top:234px;font-size:12px;color:#555;line-height:17px"><span class="c">天气</span></div>
<!-- nav -->
<div class="a" style="left:83px;top:282px;width:240px;height:45px;background:#0a8be6"></div>
<svg class="a" style="left:103px;top:297px" width="17" height="12"><rect y="0" width="16" height="2" fill="#fff"/><rect y="5" width="16" height="2" fill="#fff"/><rect y="10" width="16" height="2" fill="#fff"/></svg>
<div class="a" style="left:128px;top:294px;font-size:18px;color:#fff;line-height:22px"><span class="c">云市场分类</span></div>
<svg class="a" style="left:291px;top:298px" width="17" height="11"><path d="M1.5 1.5 L8.5 8.5 L15.5 1.5" stroke="#fff" stroke-width="2.2" fill="none"/></svg>
<div class="nv" style="left:353px"><span class="c">首页</span></div>
<div class="nv" style="left:445px;color:#2a74d8"><span class="c">数据接口</span></div>
<div class="nv" style="left:569px"><span class="c">源码商城</span></div>
<div class="nv" style="left:693px"><span class="c">常见问题</span></div>
<div class="nv" style="left:817px"><span class="c">平台动态</span></div>
<div class="nv" style="left:941px"><span class="c">联系我们</span></div>
<div class="nv" style="left:1065px"><span class="c">定制服务</span></div>
<div class="a" style="left:1228px;top:296px;width:17px;height:17px;background:#f39a1a;border-radius:2px;color:#fff;font-size:12px;line-height:17px;text-align:center"><span class="c">商</span></div>
<div class="nv" style="left:1253px"><span class="c">服务商入驻</span></div>
<div class="a" style="left:98px;top:337px;font-size:14px;color:#888;line-height:18px;white-space:nowrap"><span class="c">当前所在位置</span><span style="display:inline-block;width:14px"><span class="c">：</span></span><span class="c">首页</span> <span style="color:#aaa;font-size:13px;margin-right:2px">&gt;</span> <span class="c">数据接口</span> <span style="color:#aaa;font-size:13px;margin-right:2px">&gt;</span> <span class="c">生活服务</span> <span style="color:#aaa;font-size:13px;margin-right:2px">&gt;</span> &nbsp;&nbsp;<span class="c">全国天气查询</span></div>
<!-- left floating icons -->
<svg class="a" style="left:64px;top:350px" width="9" height="170">
 <rect x="-8" y="0" width="16" height="24" rx="2" fill="#fff" stroke="#e03030" stroke-width="1.3"/><path d="M0 16 A6 6 0 0 1 6 22" stroke="#f08020" stroke-width="2" fill="none"/><circle cx="1" cy="21" r="2" fill="#f08020"/>
 <rect x="-8" y="37" width="16" height="23" rx="2" fill="#1db53a"/><ellipse cx="2" cy="48" rx="4" ry="3.5" fill="#fff"/>
 <rect x="-8" y="73" width="16" height="23" rx="2" fill="#1a8ee8"/><path d="M-2 80 L2 86 L8 86 L3 90 L5 96 L0 92Z" fill="#f5c518"/>
 <rect x="-8" y="109" width="16" height="23" rx="2" fill="#2a5cc8"/><path d="M2 118 L8 124 L2 130Z" fill="#cde"/>
 <rect x="-8" y="137" width="16" height="31" rx="2" fill="#3f7ee8"/><rect x="-2" y="150" width="5" height="3" fill="#fff"/>
</svg>
<!-- product -->
<div class="a" style="left:113px;top:396px;width:163px;height:132px;border:1px solid #28aee8;border-radius:18px"></div>
<svg class="a" style="left:155px;top:430px" width="80" height="60" viewBox="0 0 80 60">
 <g fill="#0aade9">
  <path d="M50.8 11.3 L47.3 17.6 L53.9 17.6Z"/><path d="M64.8 16.8 L58.2 19.1 L62.5 23.4Z"/><path d="M69.9 31.3 L64.5 28.1 L64.5 34.8Z"/><path d="M64.8 45.7 L58.2 43.4 L62.5 39.1Z"/>
  <circle cx="52.5" cy="31.2" r="11.6"/>
 </g>
 <g fill="#fff"><circle cx="17" cy="38" r="8.4"/><circle cx="22.5" cy="30" r="6.9"/><circle cx="35" cy="28.5" r="11.1"/><circle cx="45" cy="38.2" r="8.2"/><rect x="17" y="30" width="28" height="16.4"/></g>
 <g fill="#0aade9"><circle cx="17" cy="38" r="7"/><circle cx="22.5" cy="30" r="5.5"/><circle cx="35" cy="28.5" r="9.7"/><circle cx="45" cy="38.2" r="6.8"/><rect x="17" y="31" width="28" height="14"/></g>
</svg>
<div class="a" style="left:326px;top:380px;font-size:16px;font-weight:bold;color:#555;line-height:20px"><span class="c">全国天气查询</span></div>
<div class="a" style="left:326px;top:408px;font-size:12px;color:#666;line-height:17px"><span class="c">全国天气查询</span>API</div>
<div class="inf" style="left:328px;top:450px"><b><span class="c">数据</span>ID<span class="c">：</span></b><span style="color:#f7941e">6</span></div>
<div class="inf" style="left:454px;top:450px"><b><span class="c">连接应用数：</span></b><span style="color:#555">48422</span></div>
<div class="inf" style="left:328px;top:470px"><b><span class="c">接口状态：</span></b><span style="color:#5cb85c"><span class="c">正常</span></span></div>
<div class="inf" style="left:454px;top:470px"><b><span class="c">接入服务商：</span></b><span style="color:#1aa5e6">haoservice</span></div>
<div class="a" style="left:666px;top:451px;font-size:17px;color:#f25a7a;line-height:22px;white-space:nowrap"><span style="display:inline-block;width:14px;font-size:16px"><span class="c">￥</span></span><b>99.00</b><span style="margin-left:4px"><span class="c">起</span></span><span style="font-size:12.5px;color:#888;margin-left:6px">80000/<span class="c">次</span></span></div>
<div class="a" style="left:811px;top:448px;width:120px;height:30px;background:#ff9204;border-radius:2px;color:#fff;font-size:12px;line-height:30px;text-align:center"><span class="c">购买套餐</span></div>
<div class="a" style="left:326px;top:513px;width:120px;height:30px;background:#0f9ae2;border-radius:1px;color:#fff;font-size:12px;line-height:30px;text-align:center"><span class="c">申请数据</span></div>
<div class="a" style="left:454px;top:513px;width:120px;height:30px;background:#0eb033;border-radius:1px;color:#fff;font-size:12px;line-height:30px;text-align:center"><span class="c">查看演示</span></div>
<!-- tabs -->
<div class="a" style="left:93px;top:603px;width:940px;height:1px;background:#dcdcdc"></div>
<div class="a" style="left:93px;top:573px;width:82px;height:31px;background:#fff;border:1px solid #dcdcdc;border-bottom:none"></div>
<div class="a" style="left:124px;top:579px;font-size:12px;font-weight:bold;color:#1aa5e6;line-height:18px">API</div>
<div class="tbx" style="left:206px"><span class="c">错误码参照</span></div>
<div class="tbx" style="left:328px"><span class="c">资费套餐</span></div>
<div class="tbx" style="left:438px"><span class="c">版本变更</span></div>
<div class="tbx" style="left:548px"><span class="c">代码示例</span></div>
<div class="tbx" style="left:658px"><span class="c">其他相关</span></div>
<!-- api content -->
<div class="a" style="left:278px;top:639px;width:1px;height:129px;background:#e6e6e6"></div>
<div class="lm" style="top:646px;color:#f2541b;font-weight:bold"><span style="font-family:'Liberation Serif',serif">1</span><span class="c">、根据城市名查询天气</span></div>
<div class="lm" style="top:681px;color:#3b8fd8"><span style="font-family:'Liberation Serif',serif">2</span><span class="c">、天气种类及标识列表</span></div>
<div class="lm" style="top:716px;color:#3b8fd8"><span style="font-family:'Liberation Serif',serif">3</span><span class="c">、根据</span><span style="font-family:'Liberation Serif',serif">IP</span><span class="c">查询天气</span></div>
<div class="ap" style="top:650px"><b><span class="c">接口地址：</span></b><span style="font-size:13px">http://apis.haoservice.com/weather</span></div>
<div class="ap" style="top:691px"><b><span class="c">支持格式：</span></b><span style="font-size:11.5px">JSON/XML</span></div>
<div class="ap" style="top:732px"><b><span class="c">请求方式：</span></b><span style="font-size:11px">GET/POST</span></div>
<!-- right sidebar -->
<div class="a" style="left:1063px;top:380px;font-size:20px;color:#333;line-height:24px;white-space:nowrap"><span class="c">推荐接口</span>/API</div>
<svg class="a" style="left:1066px;top:432px" width="53" height="37" viewBox="0 0 53 37">
 <rect width="53" height="36" rx="3.5" fill="#0cadee"/>
 <circle cx="39" cy="14" r="12.2" fill="#fff"/>
 <path d="M29.5 10 C31 7 35 6 37 8 L35.5 11 L36.5 13 L35 16 L34 21 L32 22.5 L31 18 L29 16 L28.5 13Z" fill="#0cadee"/>
 <path d="M40 7.5 L44 6.5 L48 9 L46.5 11 L48 14 L47 19 L44.5 22 L42.5 22 L42 17.5 L39.5 16 L39.5 13 L41.5 11.5Z" fill="#0cadee"/>
 <g fill="#fff"><rect x="3" y="8" width="6" height="2.6" rx="1.3"/><rect x="11" y="8" width="7" height="2.6" rx="1.3"/><rect x="3" y="11.8" width="3.5" height="2.4" rx="1.2"/><circle cx="8.3" cy="13" r="1.5"/><rect x="10.5" y="11.8" width="7.5" height="2.4" rx="1.2"/><rect x="3.5" y="15.5" width="6.5" height="2.6" rx="1.3"/><rect x="11" y="15.5" width="7" height="2.6" rx="1.3"/></g>
 <text x="5.5" y="34" font-size="7.5" font-weight="bold" fill="#fff" font-family="Liberation Mono" letter-spacing="1.6">962410</text>
</svg>
<div class="rt" style="top:435px"><span class="c">银行卡归属地查询</span></div>
<div class="rs" style="top:457px"><span class="c">根据银行卡号查询银行卡归属地信息</span></div>
<svg class="a" style="left:1066px;top:508px" width="47" height="47" viewBox="0 0 47 47">
 <path d="M23 1 L46 10.6 L23 20.2 L0.5 10.6Z" fill="#0cadee"/><path d="M0.5 12.8 L21.9 22.4 L21.9 45 L0.5 35Z" fill="#0cadee"/><path d="M24.1 22.4 L46 12.8 L46 35 L24.1 45Z" fill="#0cadee"/>
 <path d="M7 21 L15.5 25 L15.5 28 L7 24Z" fill="#fff"/>
</svg>
<div class="rt" style="top:513px"><span class="c">常用快递</span></div>
<div class="rs" style="top:535px"><span class="c">涵盖国内主流快递及部分国际快递</span></div>
<svg class="a" style="left:1076px;top:585px" width="32" height="48" viewBox="0 0 32 48">
 <rect x="0" y="0" width="32" height="48" rx="4" fill="#0cadee"/><rect x="4" y="6" width="24.2" height="31.8" fill="#fff"/><rect x="10" y="2" width="10" height="2" fill="#fff"/><circle cx="16" cy="43" r="2" fill="#fff"/>
 <path d="M15.9 30.6 C11 25.5 7.9 22.5 7.9 18.8 A8 7.8 0 0 1 23.7 18.8 C23.7 22.5 20.8 25.5 15.9 30.6Z" fill="none" stroke="#0cadee" stroke-width="1.3"/><circle cx="15.9" cy="18.8" r="1.7" fill="#0cadee"/>
</svg>
<div class="rt" style="top:591px"><span class="c">手机归属地查询</span></div>
<div class="rs" style="top:613px"><span class="c">通过手机号即可知道用户所在地</span></div>
<svg class="a" style="left:1070px;top:671px" width="50" height="46" viewBox="0 0 50 46">
 <path d="M2.7 22.8 L40.7 1 L48.4 13.6 L18.2 29.8Z" fill="#0cadee"/>
 <path d="M1.3 28 L4 26.3 L7.7 31.5 L5 33.3Z" fill="#0cadee"/><path d="M7 27 L9.5 25 L12.6 29.5 L10 31.2Z" fill="#0cadee"/>
 <path d="M29.5 26.5 L29.5 39.5 L47.5 39.5 M47.7 34 L47.7 44" stroke="#0cadee" stroke-width="2.6" fill="none"/>
 <path d="M27 26 L33 24" stroke="#0cadee" stroke-width="1.2"/>
</svg>
<div class="rt" style="top:669px"><span class="c">电子眼防拍</span></div>
<div class="rs" style="top:691px"><span class="c">最新电子眼</span>api<span class="c">，电子狗</span>api<span class="c">，通过</span>…</div>
<svg class="a" style="left:1076px;top:737px" width="34" height="31" viewBox="0 0 34 31">
 <circle cx="14.3" cy="2.9" r="2" fill="#0cadee"/><circle cx="20" cy="2.9" r="2" fill="#0cadee"/>
 <path d="M1.7 31 L1.7 11 Q1.7 5.3 7.5 5.3 L26 5.3 Q31.9 5.3 31.9 11 L31.9 31Z" fill="#0cadee"/>
 <rect x="5.2" y="13" width="23.9" height="10.6" rx="3" fill="#fff"/><rect x="12.2" y="7" width="9.8" height="3.2" fill="#fff"/>
</svg>
<div class="rt" style="top:747px">12306<span class="c">火车票查询订票</span></div>
<!-- floating panel -->
<div class="a" style="left:1285px;top:505px;width:65px;height:188px;background:#fafafa;border:1px solid #ececec;box-shadow:0 0 2px rgba(0,0,0,0.08)"></div>
<div class="a" style="left:1286px;top:583px;width:63px;height:1px;background:#e8e8e8"></div>
<div class="a" style="left:1286px;top:661px;width:63px;height:1px;background:#e8e8e8"></div>
<svg class="a" style="left:1300px;top:522px" width="36" height="29" viewBox="0 0 36 29">
 <path d="M1 9 C1 1 35 1 35 9 L34 12 L26 12 L25 8 C20 6 16 6 11 8 L10 12 L2 12Z" fill="#f25b2a"/>
 <path d="M10 11 L26 11 L32 28 L4 28Z" fill="#f25b2a"/>
 <g fill="#fff"><rect x="13" y="15" width="2" height="2"/><rect x="17" y="15" width="2" height="2"/><rect x="21" y="15" width="2" height="2"/><rect x="13" y="19" width="2" height="2"/><rect x="17" y="19" width="2" height="2"/><rect x="21" y="19" width="2" height="2"/><rect x="13" y="23" width="2" height="2"/><rect x="17" y="23" width="2" height="2"/><rect x="21" y="23" width="2" height="2"/></g>
</svg>
<div class="fp" style="top:555px"><span class="c">联系客服</span></div>
<svg class="a" style="left:1303px;top:597px" width="30" height="33" viewBox="0 0 30 33">
 <ellipse cx="15" cy="20" rx="11" ry="12" fill="#111"/><ellipse cx="15" cy="23" rx="7" ry="8.5" fill="#fff"/>
 <ellipse cx="15" cy="10" rx="9" ry="9.5" fill="#111"/>
 <ellipse cx="12" cy="9" rx="2.5" ry="3.2" fill="#fff"/><ellipse cx="18" cy="9" rx="2.5" ry="3.2" fill="#fff"/><circle cx="12.5" cy="9.5" r="1.2" fill="#111"/><circle cx="17.5" cy="9.5" r="1.2" fill="#111"/>
 <path d="M10 14 Q15 12 20 14 Q15 18 10 14Z" fill="#f7b500"/>
 <path d="M5 17 Q15 23 26 17 L27 21 Q15 26 4 21Z" fill="#e8262a"/><rect x="19" y="19" width="4" height="6" fill="#e8262a"/>
 <path d="M4 8 A11 11 0 0 1 26 8" stroke="#3a8de0" stroke-width="2" fill="none"/><rect x="2" y="8" width="4" height="6" rx="1" fill="#3a8de0"/><rect x="24" y="8" width="4" height="6" rx="1" fill="#3a8de0"/>
 <ellipse cx="8" cy="31" rx="5" ry="2" fill="#f7b500"/><ellipse cx="22" cy="31" rx="5" ry="2" fill="#f7b500"/>
</svg>
<div class="fp" style="top:633px"><span class="c">在线咨询</span></div>
<svg class="a" style="left:1309px;top:670px" width="18" height="18"><path d="M2.5 2.5 L15.5 15.5 M15.5 2.5 L2.5 15.5" stroke="#fa5c2c" stroke-width="3.8"/></svg>
<!-- scrollbar -->
<div class="a" style="left:1351px;top:121px;width:15px;height:647px;background:#f1f1f1;border-left:1px solid #e6e6e6"></div>
<svg class="a" style="left:1352px;top:121px" width="14" height="647"><path d="M3.5 11 L7 7 L10.5 11Z" fill="#a3a3a3"/><rect x="1.5" y="14.5" width="11" height="83" fill="#c1c1c1"/><path d="M3.5 636 L7 640 L10.5 636Z" fill="#505050"/></svg>
<!-- status bubble -->
<div class="a" style="left:65px;top:745px;width:432px;height:24px;background:#f2f1f0;border:1px solid #c9c9c9;border-left:none;border-bottom:none;border-top-right-radius:3px"></div>
<div class="a" style="left:68px;top:747px;font-size:15.5px;color:#3c3c3c;line-height:20px;white-space:nowrap">open.haoservice.com/center</div>
</body></html>
